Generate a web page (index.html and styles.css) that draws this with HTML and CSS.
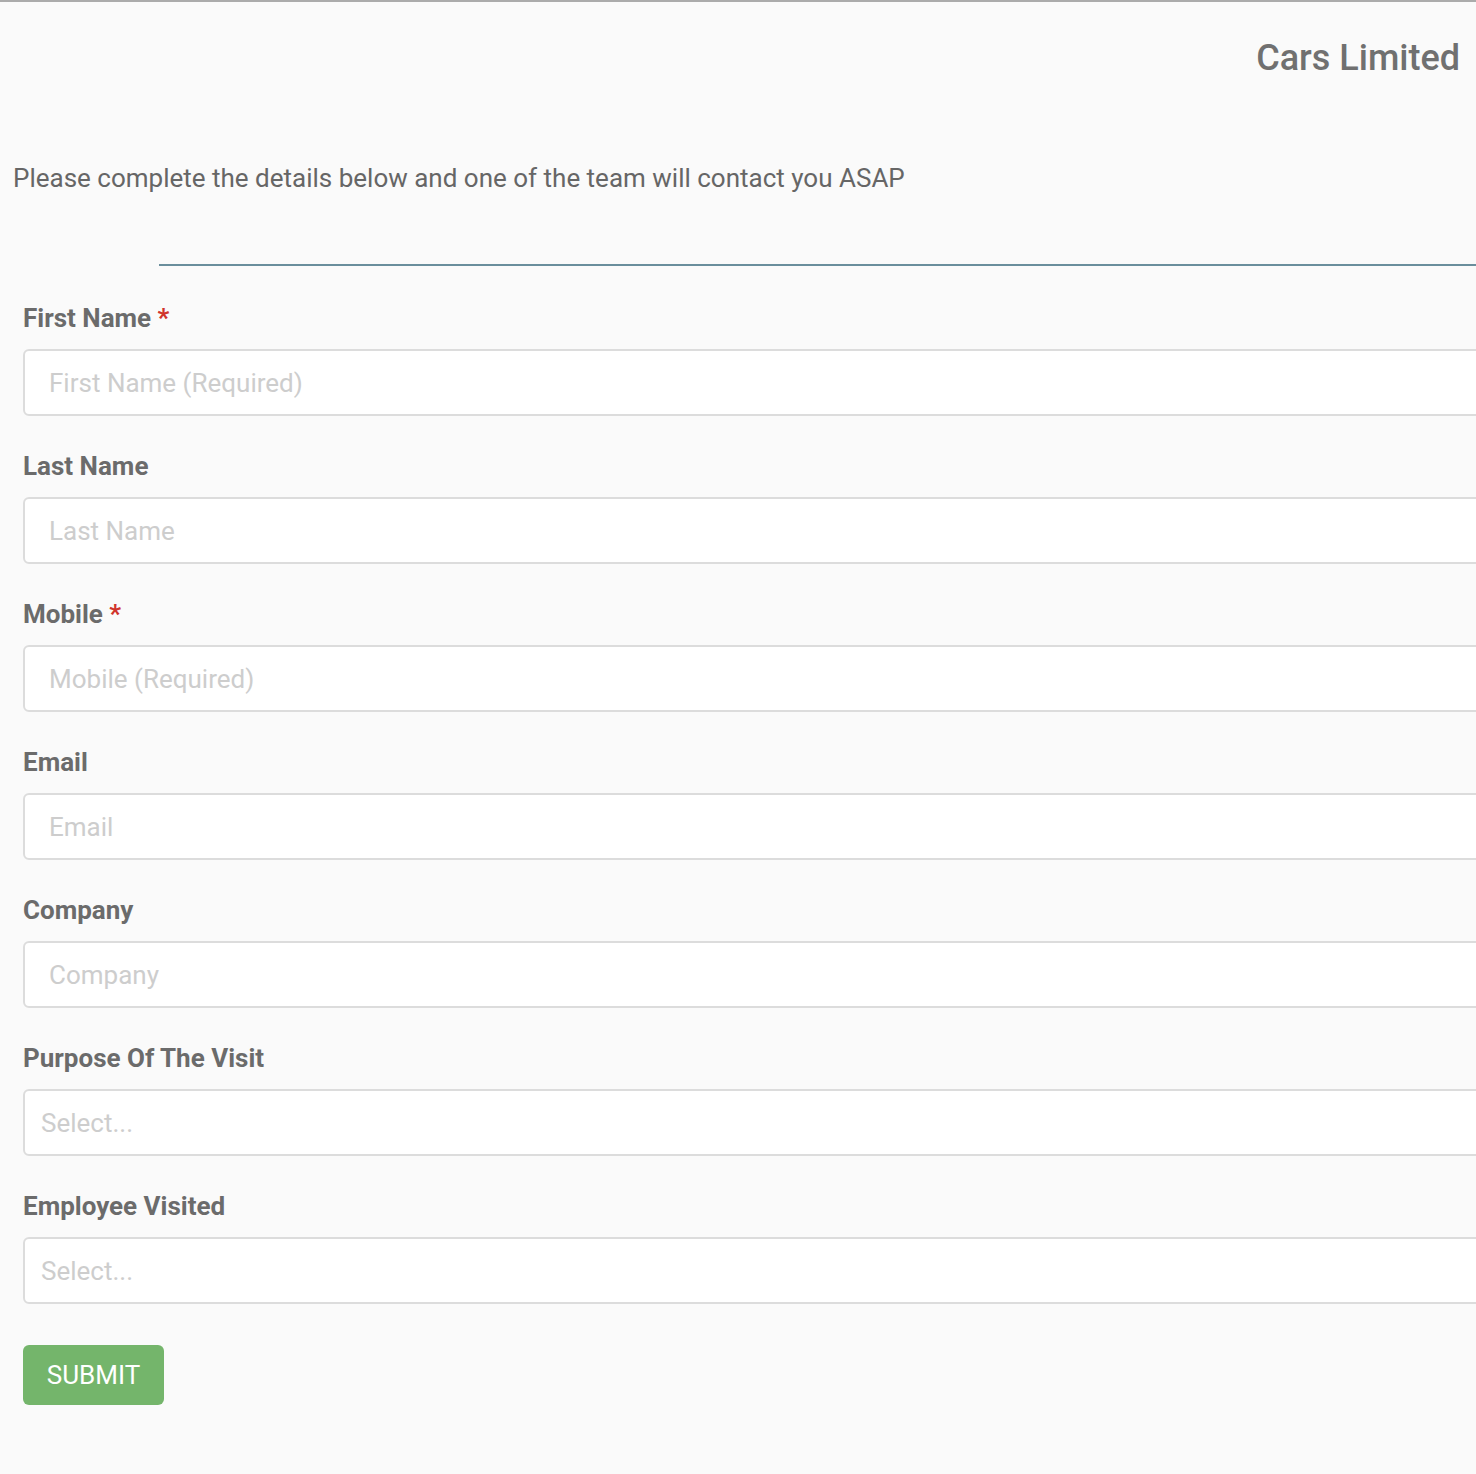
FILE: index.html
```html
<!DOCTYPE html>
<html lang="en">
    <head>
        <meta charset="UTF-8" />
        <meta name="viewport" content="width=device-width, initial-scale=1.0" />
        <title>Cars Limited</title>
        <link rel="stylesheet" href="styles.css">
    </head>
    <body>
        <div class="page">
            <header class="header">
                <h1 class="brand">Cars Limited</h1>
            </header>
            <p class="intro">Please complete the details below and one of the team will contact you ASAP</p>
            <hr class="divider" />
            <form class="form">
                <div class="field">
                    <label class="label">First Name <span class="req">*</span></label>
                    <input class="input" type="text" placeholder="First Name (Required)" />
                </div>
                <div class="field">
                    <label class="label">Last Name</label>
                    <input class="input" type="text" placeholder="Last Name" />
                </div>
                <div class="field">
                    <label class="label">Mobile <span class="req">*</span></label>
                    <input class="input" type="text" placeholder="Mobile (Required)" />
                </div>
                <div class="field">
                    <label class="label">Email</label>
                    <input class="input" type="text" placeholder="Email" />
                </div>
                <div class="field">
                    <label class="label">Company</label>
                    <input class="input" type="text" placeholder="Company" />
                </div>
                <div class="field">
                    <label class="label">Purpose Of The Visit</label>
                    <div class="select"><span class="select-text">Select...</span></div>
                </div>
                <div class="field">
                    <label class="label">Employee Visited</label>
                    <div class="select"><span class="select-text">Select...</span></div>
                </div>
                <button class="submit" type="button">SUBMIT</button>
            </form>
        </div>
    </body>
</html>
```

FILE: styles.css
```css
* {
    padding: 0;
    margin: 0;
    box-sizing: border-box;
}
html,
body {
    overflow: hidden;
}
body {
    font-family: Roboto, "Liberation Sans", sans-serif;
    background-color: #fafafa;
    color: #666;
}
.page {
    border-top: 2px solid #ababab;
    min-height: 1474px;
}
.header {
    display: flex;
    justify-content: flex-end;
    padding: 36px 16px 0 0;
}
.brand {
    font-size: 36px;
    line-height: 40px;
    font-weight: 500;
    color: #707070;
}
.intro {
    margin: 85px 0 0 13px;
    font-size: 26px;
    line-height: 30px;
    color: #666;
}
.divider {
    border: none;
    height: 2px;
    background-color: #6a8e9c;
    margin: 71px 0 0 159px;
}
.form {
    padding: 37px 0 0 23px;
    display: flex;
    flex-direction: column;
    align-items: flex-start;
}
.field {
    width: calc(100% + 40px);
    margin-bottom: 35px;
}
.label {
    display: block;
    font-size: 26px;
    line-height: 30px;
    font-weight: 700;
    color: #6b6b6b;
    margin-bottom: 16px;
}
.req {
    color: #d0342c;
}
.input,
.select {
    display: block;
    width: 100%;
    height: 67px;
    border: 2px solid #dcdcdc;
    border-radius: 6px;
    background-color: #fff;
    font-family: inherit;
    font-size: 26px;
    color: #444;
    padding: 0 24px;
    outline: none;
}
.input::placeholder {
    color: #cdcdcd;
}
.select {
    display: flex;
    align-items: center;
    padding: 0 16px;
}
.select-text {
    color: #cdcdcd;
}
.submit {
    all: unset;
    margin-top: 6px;
    width: 141px;
    height: 60px;
    display: flex;
    justify-content: center;
    align-items: center;
    border-radius: 6px;
    background-color: #74b56b;
    color: #fff;
    font-size: 26px;
    cursor: pointer;
}
```
